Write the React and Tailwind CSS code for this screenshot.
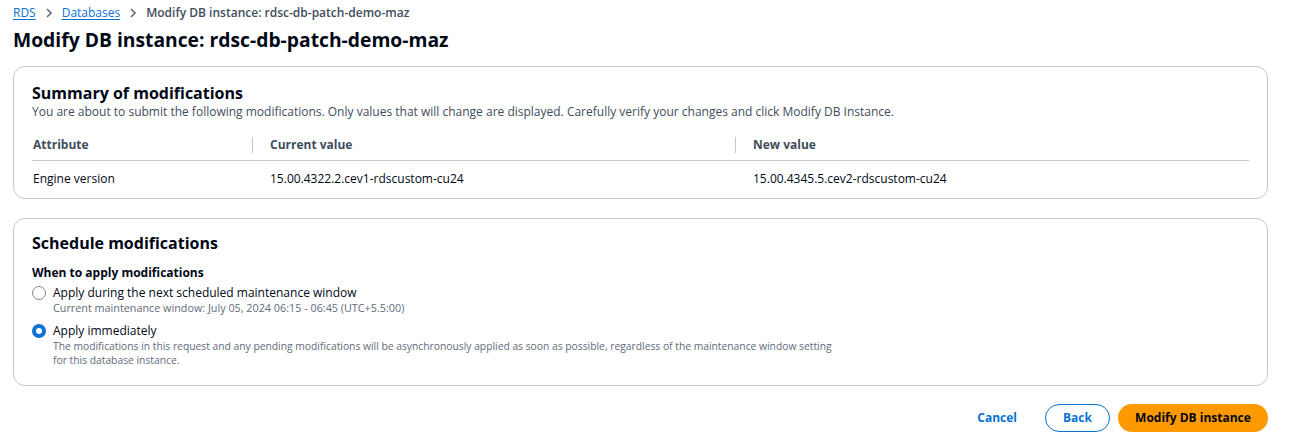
import React, { useState } from 'react';

const font = { fontFamily: '"Open Sans", "Noto Sans", sans-serif' };

const Radio = ({ checked, onClick }) => (
  <button
    onClick={onClick}
    className={`mt-[2px] w-[14px] h-[14px] rounded-full shrink-0 cursor-pointer ${checked ? 'border-[4px] border-[#0972d3] bg-white' : 'border-[1.5px] border-[#7d8998] bg-white'}`}
  />
);

export default function App() {
  const [when, setWhen] = useState('now');

  return (
    <div style={font} className="w-[1289px] h-[444px] bg-white text-[#000716] pl-[13px] pr-[21px] pt-[5px] overflow-hidden">
      <nav className="flex items-center gap-[8px] text-[12px] leading-[16px]">
        <a className="text-[#0972d3] underline underline-offset-2 cursor-pointer">RDS</a>
        <svg width="10" height="10" viewBox="0 0 10 10" className="text-[#5f6b7a]">
          <path d="M3 1l4 4-4 4" fill="none" stroke="currentColor" strokeWidth="1.6" />
        </svg>
        <a className="text-[#0972d3] underline underline-offset-2 cursor-pointer">Databases</a>
        <svg width="10" height="10" viewBox="0 0 10 10" className="text-[#5f6b7a]">
          <path d="M3 1l4 4-4 4" fill="none" stroke="currentColor" strokeWidth="1.6" />
        </svg>
        <span className="text-[#414d5c] font-semibold">Modify DB instance: rdsc-db-patch-demo-maz</span>
      </nav>

      <h1 className="mt-[7px] text-[19.3px] leading-[24px] font-bold">Modify DB instance: rdsc-db-patch-demo-maz</h1>

      <section className="mt-[14px] border border-[#c6c6cd] rounded-[12px] pl-[18px] pr-[18px] pt-[15px] h-[133px]">
        <h2 className="text-[16px] leading-[22px] font-bold">Summary of modifications</h2>
        <p className="text-[12px] leading-[16px] text-[#414d5c]">
          You are about to submit the following modifications. Only values that will change are displayed. Carefully verify your changes and click Modify DB Instance.
        </p>
        <div className="mt-[10px] grid grid-cols-[220px_483px_1fr] text-[12px]">
          <div className="font-bold text-[#414d5c] h-[31px] flex items-center pl-[1px] border-b border-[#c6c6cd]">Attribute</div>
          <div className="font-bold text-[#414d5c] h-[31px] flex items-center border-b border-[#c6c6cd]">
            <span className="w-px h-[16px] bg-[#c6c6cd] mr-[17px]" />Current value
          </div>
          <div className="font-bold text-[#414d5c] h-[31px] flex items-center border-b border-[#c6c6cd]">
            <span className="w-px h-[16px] bg-[#c6c6cd] mr-[17px]" />New value
          </div>
          <div className="h-[35px] flex items-center pl-[1px]">Engine version</div>
          <div className="h-[35px] flex items-center pl-[18px]">15.00.4322.2.cev1-rdscustom-cu24</div>
          <div className="h-[35px] flex items-center pl-[18px]">15.00.4345.5.cev2-rdscustom-cu24</div>
        </div>
      </section>

      <section className="mt-[19px] border border-[#c6c6cd] rounded-[12px] pl-[18px] pr-[18px] pt-[13px] h-[168px]">
        <h2 className="text-[16px] leading-[22px] font-bold">Schedule modifications</h2>
        <div className="mt-[11px] text-[12px] leading-[16px] font-bold">When to apply modifications</div>
        <div className="mt-[3px] flex gap-[7px]">
          <Radio checked={when === 'next'} onClick={() => setWhen('next')} />
          <div>
            <div className="text-[12px] leading-[17px]">Apply during the next scheduled maintenance window</div>
            <div className="text-[10.8px] leading-[14px] text-[#5f6b7a]">Current maintenance window: July 05, 2024 06:15 - 06:45 (UTC+5.5:00)</div>
          </div>
        </div>
        <div className="mt-[7px] flex gap-[7px]">
          <Radio checked={when === 'now'} onClick={() => setWhen('now')} />
          <div>
            <div className="text-[12px] leading-[17px]">Apply immediately</div>
            <div className="text-[10.3px] leading-[14px] text-[#5f6b7a] w-[790px]">
              The modifications in this request and any pending modifications will be asynchronously applied as soon as possible, regardless of the maintenance window setting for this database instance.
            </div>
          </div>
        </div>
      </section>

      <div className="mt-[18px] flex justify-end items-center gap-[8px] text-[12px] font-bold">
        <button className="text-[#0972d3] px-[20px] h-[28px] cursor-pointer">Cancel</button>
        <button className="text-[#0972d3] border-[1.5px] border-[#0972d3] rounded-full w-[65px] h-[28px] cursor-pointer">Back</button>
        <button className="bg-[#ff9900] text-[#000716] rounded-full w-[150px] h-[28px] cursor-pointer">Modify DB instance</button>
      </div>
    </div>
  );
}
